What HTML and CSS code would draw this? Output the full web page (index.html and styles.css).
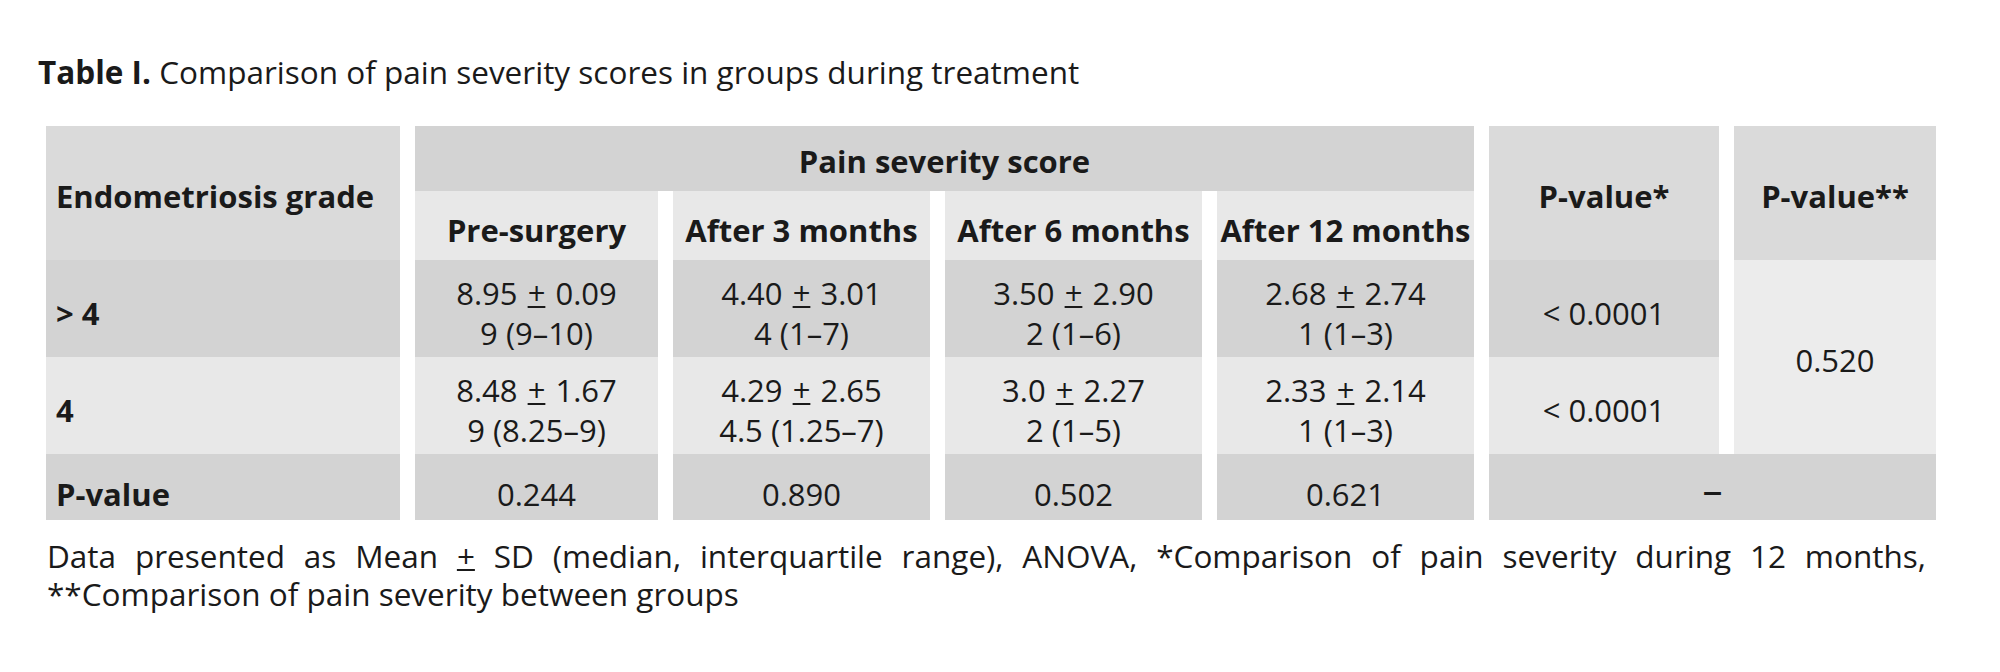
FILE: index.html
```html
<!DOCTYPE html>
<html>
<head>
<meta charset="utf-8">
<link rel="stylesheet" href="styles.css">
</head>
<body>
<div class="page">
  <p class="caption"><b>Table I.</b> Comparison of pain severity scores in groups during treatment</p>
  <div class="table">
    <div class="cell head-a rowspan2 left bold"><span>Endometriosis grade</span></div>
    <div class="cell dark span4 bold"><span>Pain severity score</span></div>
    <div class="cell head-a rowspan2 bold"><span>P-value*</span></div>
    <div class="cell head-a rowspan2 bold"><span>P-value**</span></div>
    <div class="cell light bold sub"><span>Pre-surgery</span></div>
    <div class="cell light bold sub"><span>After 3 months</span></div>
    <div class="cell light bold sub"><span>After 6 months</span></div>
    <div class="cell light bold sub"><span>After 12 months</span></div>

    <div class="cell dark left bold data"><span>&gt; 4</span></div>
    <div class="cell dark data"><span>8.95 <u>+</u> 0.09<br>9 (9–10)</span></div>
    <div class="cell dark data"><span>4.40 <u>+</u> 3.01<br>4 (1–7)</span></div>
    <div class="cell dark data"><span>3.50 <u>+</u> 2.90<br>2 (1–6)</span></div>
    <div class="cell dark data"><span>2.68 <u>+</u> 2.74<br>1 (1–3)</span></div>
    <div class="cell dark data"><span>&lt; 0.0001</span></div>
    <div class="cell lighter rowspan2"><span>0.520</span></div>

    <div class="cell light left bold data"><span>4</span></div>
    <div class="cell light data"><span>8.48 <u>+</u> 1.67<br>9 (8.25–9)</span></div>
    <div class="cell light data"><span>4.29 <u>+</u> 2.65<br>4.5 (1.25–7)</span></div>
    <div class="cell light data"><span>3.0 <u>+</u> 2.27<br>2 (1–5)</span></div>
    <div class="cell light data"><span>2.33 <u>+</u> 2.14<br>1 (1–3)</span></div>
    <div class="cell light data"><span>&lt; 0.0001</span></div>

    <div class="cell dark left bold last"><span>P-value</span></div>
    <div class="cell dark last"><span>0.244</span></div>
    <div class="cell dark last"><span>0.890</span></div>
    <div class="cell dark last"><span>0.502</span></div>
    <div class="cell dark last"><span>0.621</span></div>
    <div class="cell dark span2 dash"><span>–</span></div>
  </div>
  <div class="note">
    <span class="note-line">Data presented as Mean <u>+</u> SD (median, interquartile range), ANOVA, *Comparison of pain severity during 12 months,</span>
    <span class="note-last">**Comparison of pain severity between groups</span>
  </div>
</div>
</body>
</html>
```

FILE: styles.css
```css
html, body {
  margin: 0;
  padding: 0;
  background: #ffffff;
}
body {
  font-family: "Open Sans", Lato, "Liberation Sans", sans-serif;
  color: #1a1a1a;
}
.page {
  padding: 52px 64px 0 38px;
}
.caption {
  margin: 0 0 34px 0;
  font-size: 31.5px;
  line-height: 40px;
}
.caption b {
  font-weight: 700;
}
.table {
  margin-left: 8px;
  width: 1890px;
  display: grid;
  grid-template-columns: 354px 243px 257px 257px 257px 230px 202px;
  grid-template-rows: 65px 69px 97px 97px 66px;
  column-gap: 15px;
  row-gap: 0;
}
.cell {
  display: flex;
  align-items: center;
  justify-content: center;
  text-align: center;
  font-size: 31px;
  line-height: 40px;
  padding-top: 5px;
}
.cell.left {
  justify-content: flex-start;
  text-align: left;
  padding-left: 10px;
}
.bold {
  font-weight: 700;
}
.cell u, .note u {
  text-decoration: underline;
  text-underline-offset: 1px;
  text-decoration-thickness: 2px;
}
.cell u {
  margin: 0 2px;
}
.sub {
  padding-top: 8px;
}
.data {
  padding-top: 8px;
}
.last {
  padding-top: 14px;
}
.head-a {
  background: #dadada;
}
.dark {
  background: #d3d3d3;
}
.light {
  background: #e8e8e8;
}
.lighter {
  background: #ececec;
}
.rowspan2 {
  grid-row: span 2;
}
.span4 {
  grid-column: span 4;
}
.span2 {
  grid-column: span 2;
}
.dash {
  font-size: 40px;
  padding-top: 4px;
}
.note {
  margin: 17px 0 0 9px;
  width: 1879px;
  font-size: 31.5px;
  line-height: 38px;
}
.note-line {
  display: block;
  text-align: justify;
  text-align-last: justify;
}
.note-last {
  display: block;
}
```
